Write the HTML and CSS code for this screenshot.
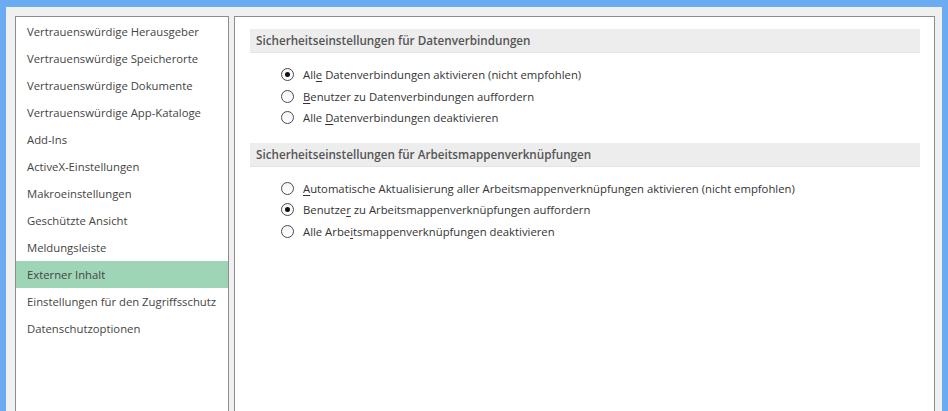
FILE: index.html
```html
<!DOCTYPE html>
<html lang="de">
<head>
  <meta charset="UTF-8">
  <title>Trust Center - Externer Inhalt</title>
  <link rel="stylesheet" href="styles.css">
</head>
<body>
  <div class="frame">
    <div class="dialog">
      <ul class="nav-list">
        <li class="nav-item">Vertrauenswürdige Herausgeber</li>
        <li class="nav-item">Vertrauenswürdige Speicherorte</li>
        <li class="nav-item">Vertrauenswürdige Dokumente</li>
        <li class="nav-item">Vertrauenswürdige App-Kataloge</li>
        <li class="nav-item">Add-Ins</li>
        <li class="nav-item">ActiveX-Einstellungen</li>
        <li class="nav-item">Makroeinstellungen</li>
        <li class="nav-item">Geschützte Ansicht</li>
        <li class="nav-item">Meldungsleiste</li>
        <li class="nav-item selected">Externer Inhalt</li>
        <li class="nav-item">Einstellungen für den Zugriffsschutz</li>
        <li class="nav-item">Datenschutzoptionen</li>
      </ul>
      <div class="content">
        <div class="section">
          <div class="section-title">Sicherheitseinstellungen für Datenverbindungen</div>
          <div class="options">
            <label class="option"><span class="radio checked"></span><span>All<u>e</u> Datenverbindungen aktivieren (nicht empfohlen)</span></label>
            <label class="option"><span class="radio"></span><span><u>B</u>enutzer zu Datenverbindungen auffordern</span></label>
            <label class="option"><span class="radio"></span><span>Alle <u>D</u>atenverbindungen deaktivieren</span></label>
          </div>
        </div>
        <div class="section">
          <div class="section-title">Sicherheitseinstellungen für Arbeitsmappenverknüpfungen</div>
          <div class="options">
            <label class="option"><span class="radio"></span><span><u>A</u>utomatische Aktualisierung aller Arbeitsmappenverknüpfungen aktivieren (nicht empfohlen)</span></label>
            <label class="option"><span class="radio checked"></span><span>Benutze<u>r</u> zu Arbeitsmappenverknüpfungen auffordern</span></label>
            <label class="option"><span class="radio"></span><span>Alle Arbe<u>i</u>tsmappenverknüpfungen deaktivieren</span></label>
          </div>
        </div>
      </div>
    </div>
  </div>
</body>
</html>
```

FILE: styles.css
```css
html, body {
  margin: 0;
  padding: 0;
  height: 100%;
  overflow: hidden;
}
body {
  background: #6aabf2;
  font-family: 'Open Sans', 'Noto Sans', Arial, sans-serif;
  font-size: 11.3px;
}
.frame {
  margin: 7px 6px 0 6px;
  background: #f0f0f0;
  height: calc(100% - 7px);
  padding: 9px 7px 0 9px;
  box-sizing: border-box;
}
.dialog {
  display: flex;
  gap: 5px;
  height: 100%;
}
.nav-list {
  list-style: none;
  margin: 0;
  padding: 1px 0 0 0;
  width: 212px;
  background: #fff;
  border: 1px solid #8c8c8c;
  border-bottom: none;
  color: #444;
}
.nav-item {
  height: 27px;
  line-height: 27px;
  padding-left: 11px;
  white-space: nowrap;
}
.nav-item.selected {
  background: #9fd5b7;
}
.content {
  flex: 1;
  background: #fff;
  border: 1px solid #8c8c8c;
  border-bottom: none;
  padding: 12px 14px 0 15px;
}
.section-title {
  height: 24px;
  line-height: 23px;
  background: #ededed;
  border-bottom: 1px solid #e4e4e4;
  box-sizing: border-box;
  padding-left: 6px;
  font-size: 11.7px;
  font-weight: 600;
  color: #555;
}
.options {
  padding: 11px 0 14px 31px;
}
.option {
  display: flex;
  align-items: center;
  height: 21.5px;
  color: #333;
  white-space: nowrap;
}
.radio {
  width: 11px;
  height: 11px;
  border: 1px solid #4a4a4a;
  border-radius: 50%;
  background: linear-gradient(#f4f4f4, #fff);
  margin-right: 9px;
  display: flex;
  align-items: center;
  justify-content: center;
  flex-shrink: 0;
}
.radio.checked::after {
  content: "";
  width: 5px;
  height: 5px;
  border-radius: 50%;
  background: #111;
}
u {
  text-underline-offset: 2px;
}
```
